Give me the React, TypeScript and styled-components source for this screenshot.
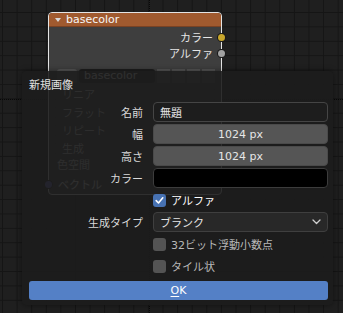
import React from 'react';
import styled, { createGlobalStyle } from 'styled-components';

const GlobalStyle = createGlobalStyle`
  html, body {
    margin: 0;
    padding: 0;
    background: #1d1d1d;
  }
  body {
    font-family: "DejaVu Sans", "Noto Sans CJK JP", sans-serif;
  }
`;

const Canvas = styled.div`
  position: relative;
  width: 343px;
  height: 313px;
  overflow: hidden;
  background-color: #1f1f1f;
  background-image:
    linear-gradient(to right, #151515 1px, transparent 1px),
    linear-gradient(to bottom, #151515 1px, transparent 1px);
  background-size: 14.6px 14.4px;
  background-position: 2px 12px;
`;

const AxisV = styled.div`
  position: absolute;
  left: 149px;
  top: 0;
  width: 1px;
  height: 313px;
  background: repeating-linear-gradient(to bottom, #080808 0 1px, transparent 1px 2px);
`;

const AxisH = styled.div`
  position: absolute;
  left: 0;
  top: 99px;
  width: 343px;
  height: 1px;
  background: repeating-linear-gradient(to right, #080808 0 1px, transparent 1px 2px);
`;

/* node behind the dialog */

const Node = styled.div`
  position: absolute;
  left: 48px;
  top: 12px;
  width: 172px;
  height: 181px;
  border: 1px solid #e4e4e4;
  border-radius: 4px;
  background: #3e3e3e;
  display: flex;
  flex-direction: column;
  font-size: 11px;
  color: #e6e6e6;
`;

const NodeHeader = styled.div`
  height: 13px;
  background: #a05a2f;
  border-bottom: 1px solid #7a4223;
  border-radius: 3px 3px 0 0;
  display: flex;
  align-items: center;
  gap: 5px;
  padding-left: 6px;
  color: #f6f6f6;
  line-height: 13px;
`;

const Triangle = styled.span`
  width: 0;
  height: 0;
  border-left: 3px solid transparent;
  border-right: 3px solid transparent;
  border-top: 4px solid #d8d8d8;
`;

const NodeBody = styled.div`
  display: flex;
  flex-direction: column;
  padding-top: 2px;
`;

const OutputRow = styled.div`
  height: 16px;
  display: flex;
  align-items: center;
  justify-content: flex-end;
  gap: 5px;
`;

const InputRow = styled.div`
  height: 18px;
  display: flex;
  align-items: center;
  gap: 6px;
`;

const Socket = styled.span<{ $color: string; $side: 'left' | 'right' }>`
  width: 7px;
  height: 7px;
  border-radius: 50%;
  background: ${p => p.$color};
  box-shadow: 0 0 0 1px #1a1a1a;
  ${p => (p.$side === 'right' ? 'margin-right: -4px;' : 'margin-left: -4px;')}
`;

const ImageRow = styled.div`
  height: 18px;
  margin-top: 6px;
  display: flex;
  align-items: center;
  gap: 2px;
  padding: 0 6px 0 8px;
`;

const ImageIcon = styled.div`
  width: 20px;
  height: 14px;
  border-radius: 3px;
  background: #545454;
`;

const ImageName = styled.div`
  flex: 1;
  height: 14px;
  border-radius: 3px;
  background: #1e1e1e;
  padding-left: 5px;
  line-height: 14px;
`;

const IconBtn = styled.div`
  width: 13px;
  height: 14px;
  background: #545454;
  &:first-of-type {
    border-radius: 3px 0 0 3px;
  }
`;

const NodeMenu = styled.div`
  flex: 1;
  height: 15px;
  margin: 0 6px;
  border-radius: 3px;
  background: #363636;
  padding-left: 7px;
  display: flex;
  align-items: center;
  color: #cfcfcf;
`;

const PlainLabel = styled.div`
  padding-left: 8px;
  height: 18px;
  line-height: 18px;
  color: #cfcfcf;
`;

/* dialog */

const Dialog = styled.div`
  position: absolute;
  left: 22px;
  top: 71px;
  width: 311px;
  height: 234px;
  box-sizing: border-box;
  padding: 8px 5px 5px 7px;
  background: rgba(29, 29, 29, 0.91);
  border-radius: 5px;
  box-shadow: 0 0 6px rgba(0, 0, 0, 0.45);
  display: flex;
  flex-direction: column;
  font-size: 11px;
`;

const Title = styled.div`
  line-height: 14px;
  color: #e0e0e0;
  margin-bottom: 9px;
`;

const Form = styled.div`
  display: grid;
  grid-template-columns: 114px 175px;
  column-gap: 10px;
  row-gap: 2px;
  grid-auto-rows: 20px;
`;

const Label = styled.div`
  justify-self: end;
  align-self: center;
  color: #dadada;
`;

type Kind = 'text' | 'number' | 'color' | 'menu';

const fieldBg: Record<Kind, string> = {
  text: '#1d1d1d',
  number: '#555555',
  color: '#000000',
  menu: '#282828',
};

const fieldBorder: Record<Kind, string> = {
  text: '#454545',
  number: '#4a4a4a',
  color: '#3c3c3c',
  menu: '#3f3f3f',
};

const Field = styled.div<{ $kind: Kind }>`
  box-sizing: border-box;
  height: 20px;
  border-radius: 4px;
  border: 1px solid ${p => fieldBorder[p.$kind]};
  background: ${p => fieldBg[p.$kind]};
  display: flex;
  align-items: center;
  justify-content: ${p => (p.$kind === 'number' ? 'center' : 'space-between')};
  padding: 0 6px;
  color: #e6e6e6;
`;

const CheckRow = styled.label`
  grid-column: 2;
  display: flex;
  align-items: center;
  gap: 5px;
`;

const Box = styled.span<{ $checked?: boolean }>`
  width: 13px;
  height: 13px;
  border-radius: 3px;
  background: ${p => (p.$checked ? '#4772b3' : '#545454')};
  display: flex;
  align-items: center;
  justify-content: center;
`;

const CheckText = styled.span<{ $checked?: boolean }>`
  color: ${p => (p.$checked ? '#ffffff' : '#b8b8b8')};
`;

const OkButton = styled.div`
  margin-top: 5px;
  height: 19px;
  border-radius: 3px;
  background: #5480c6;
  color: #ffffff;
  display: flex;
  align-items: center;
  justify-content: center;
  u {
    text-decoration-thickness: 1px;
    text-underline-offset: 2px;
  }
`;

const Chevron = () => (
  <svg width="9" height="6" viewBox="0 0 9 6">
    <polyline points="1,1 4.5,4.5 8,1" fill="none" stroke="#cfcfcf" strokeWidth="1.3" strokeLinecap="round" strokeLinejoin="round" />
  </svg>
);

const Check = () => (
  <svg width="11" height="11" viewBox="0 0 11 11">
    <polyline points="2.2,5.6 4.5,8 8.8,2.8" fill="none" stroke="#ffffff" strokeWidth="1.6" strokeLinecap="round" strokeLinejoin="round" />
  </svg>
);

const nodeMenus = ['リニア', 'フラット', 'リピート', '生成'];

export default function App() {
  return (
    <Canvas>
      <GlobalStyle />
      <AxisV />
      <AxisH />

      <Node>
        <NodeHeader>
          <Triangle />
          basecolor
        </NodeHeader>
        <NodeBody>
          <OutputRow>
            カラー
            <Socket $color="#c7a52b" $side="right" />
          </OutputRow>
          <OutputRow>
            アルファ
            <Socket $color="#a1a1a1" $side="right" />
          </OutputRow>
          <ImageRow>
            <ImageIcon />
            <ImageName>basecolor</ImageName>
            <IconBtn />
            <IconBtn />
            <IconBtn />
            <IconBtn />
          </ImageRow>
          {nodeMenus.map(m => (
            <InputRow key={m}>
              <NodeMenu>{m}</NodeMenu>
            </InputRow>
          ))}
          <PlainLabel>色空間</PlainLabel>
          <InputRow>
            <Socket $color="#6363c7" $side="left" />
            ベクトル
          </InputRow>
        </NodeBody>
      </Node>

      <Dialog>
        <Title>新規画像</Title>
        <Form>
          <Label>名前</Label>
          <Field $kind="text">無題</Field>
          <Label>幅</Label>
          <Field $kind="number">1024 px</Field>
          <Label>高さ</Label>
          <Field $kind="number">1024 px</Field>
          <Label>カラー</Label>
          <Field $kind="color" />
          <CheckRow>
            <Box $checked>
              <Check />
            </Box>
            <CheckText $checked>アルファ</CheckText>
          </CheckRow>
          <Label>生成タイプ</Label>
          <Field $kind="menu">
            ブランク
            <Chevron />
          </Field>
          <CheckRow>
            <Box />
            <CheckText>32ビット浮動小数点</CheckText>
          </CheckRow>
          <CheckRow>
            <Box />
            <CheckText>タイル状</CheckText>
          </CheckRow>
        </Form>
        <OkButton>
          <span>
            <u>O</u>K
          </span>
        </OkButton>
      </Dialog>
    </Canvas>
  );
}
